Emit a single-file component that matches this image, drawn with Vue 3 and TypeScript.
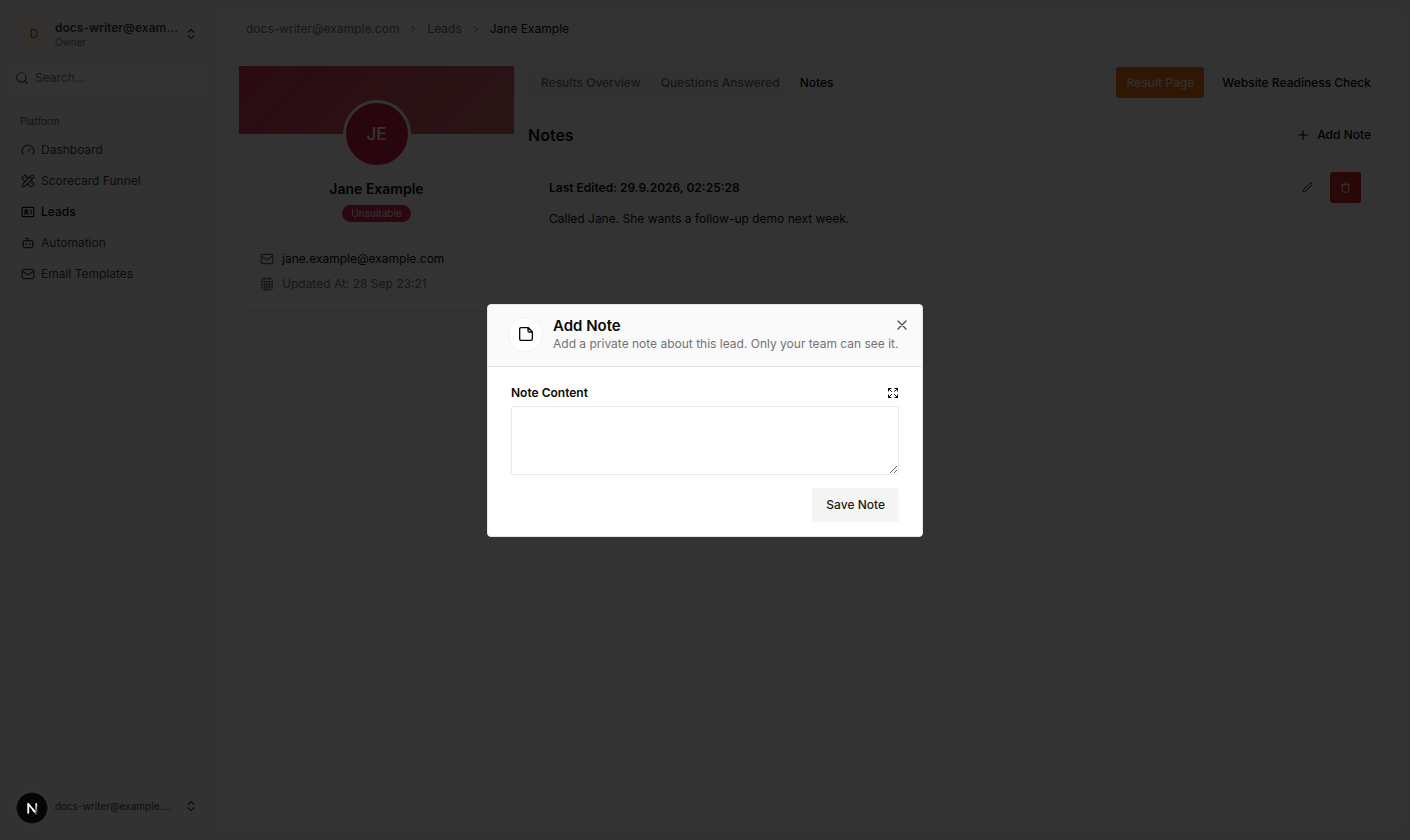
<script setup lang="ts">
import { ref } from 'vue'

interface NavItem {
  label: string
  icon: string
}

const navItems: NavItem[] = [
  { label: 'Dashboard', icon: 'gauge' },
  { label: 'Scorecard Funnel', icon: 'tools' },
  { label: 'Leads', icon: 'contact' },
  { label: 'Automation', icon: 'bot' },
  { label: 'Email Templates', icon: 'mail' },
]
const tabs: string[] = ['Results Overview', 'Questions Answered', 'Notes']
const activeNav = ref('Leads')
const activeTab = ref('Notes')
const search = ref('')
const note = ref('')
</script>

<template>
  <div class="app">
    <aside class="sidebar">
      <button class="account" type="button">
        <span class="account-logo">D</span>
        <span class="account-text">
          <span class="account-name">docs-writer@example.com</span>
          <span class="account-role">Owner</span>
        </span>
        <svg class="icon" viewBox="0 0 24 24"><path d="m7 15 5 5 5-5M7 9l5-5 5 5" /></svg>
      </button>
      <label class="search">
        <svg class="icon" viewBox="0 0 24 24"><circle cx="11" cy="11" r="8" /><path d="m21 21-4.3-4.3" /></svg>
        <input v-model="search" type="text" placeholder="Search..." aria-label="Search" />
      </label>
      <nav class="nav">
        <span class="nav-title">Platform</span>
        <a
          v-for="item in navItems"
          :key="item.label"
          href="#"
          class="nav-link"
          :class="{ active: item.label === activeNav }"
          @click.prevent="activeNav = item.label"
        >
          <svg class="icon" viewBox="0 0 24 24">
            <path v-if="item.icon === 'gauge'" d="m12 14 4-4M3.34 19a10 10 0 1 1 17.32 0" />
            <template v-else-if="item.icon === 'tools'">
              <path d="M13 7 8.7 2.7a2.41 2.41 0 0 0-3.4 0L2.7 5.3a2.41 2.41 0 0 0 0 3.4L7 13M8 6l2-2M18 16l2-2M17 11l4.3 4.3c.94.94.94 2.46 0 3.4l-2.6 2.6c-.94.94-2.46.94-3.4 0L11 17" />
              <path d="M21.174 6.812a1 1 0 0 0-3.986-3.987L3.842 16.174a2 2 0 0 0-.5.83l-1.321 4.352a.5.5 0 0 0 .623.622l4.353-1.32a2 2 0 0 0 .83-.497zM15 5l4 4" />
            </template>
            <template v-else-if="item.icon === 'contact'">
              <rect x="2" y="4" width="20" height="16" rx="2" />
              <circle cx="9" cy="10" r="2" />
              <path d="M6 16c0-4 6-4 6 0M16 10h2M16 14h2" />
            </template>
            <template v-else-if="item.icon === 'bot'">
              <rect x="4" y="8" width="16" height="12" rx="2" />
              <path d="M12 8V4H8M2 14h2M20 14h2M15 13v2M9 13v2" />
            </template>
            <template v-else>
              <rect x="2" y="4" width="20" height="16" rx="2" />
              <path d="m22 7-8.97 5.7a1.94 1.94 0 0 1-2.06 0L2 7" />
            </template>
          </svg>
          {{ item.label }}
        </a>
      </nav>
      <button class="user" type="button">
        <span class="user-name">docs-writer@example.com</span>
        <svg class="icon" viewBox="0 0 24 24"><path d="m7 15 5 5 5-5M7 9l5-5 5 5" /></svg>
      </button>
    </aside>

    <main class="main">
      <header class="crumbs">
        <a href="#">docs-writer@example.com</a>
        <svg class="chevron" viewBox="0 0 24 24"><path d="m9 18 6-6-6-6" /></svg>
        <a href="#">Leads</a>
        <svg class="chevron" viewBox="0 0 24 24"><path d="m9 18 6-6-6-6" /></svg>
        <span class="crumb-current">Jane Example</span>
      </header>

      <div class="content">
        <section class="profile">
          <div class="banner"></div>
          <div class="avatar">JE</div>
          <h2 class="profile-name">Jane Example</h2>
          <span class="status">Unsuitable</span>
          <div class="facts">
            <a class="fact strong" href="#">
              <svg class="icon" viewBox="0 0 24 24"><rect x="2" y="4" width="20" height="16" rx="2" /><path d="m22 7-8.97 5.7a1.94 1.94 0 0 1-2.06 0L2 7" /></svg>
              jane.example@example.com
            </a>
            <span class="fact">
              <svg class="icon thin" viewBox="0 0 24 24"><rect x="3" y="3" width="18" height="19" rx="2" /><path d="M3 8h18M3 13h18M3 17h18M8 8v14M12 8v14M16 8v14M8 1v4M16 1v4" /></svg>
              Updated At: 28 Sep 23:21
            </span>
          </div>
        </section>

        <section class="detail">
          <div class="bar">
            <div class="tabs" role="tablist">
              <button
                v-for="tab in tabs"
                :key="tab"
                type="button"
                role="tab"
                class="tab"
                :class="{ active: tab === activeTab }"
                :aria-selected="tab === activeTab"
                @click="activeTab = tab"
              >
                {{ tab }}
              </button>
            </div>
            <div class="bar-actions">
              <button class="btn orange" type="button">Result Page</button>
              <button class="btn outline" type="button">Website Readiness Check</button>
            </div>
          </div>
          <div class="notes-head">
            <h1>Notes</h1>
            <button class="btn outline add" type="button">
              <svg class="icon" viewBox="0 0 24 24"><path d="M5 12h14M12 5v14" /></svg>
              Add Note
            </button>
          </div>
          <article class="note">
            <div class="note-head">
              <h3>Last Edited: 29.9.2026, 02:25:28</h3>
              <div class="note-actions">
                <button class="btn outline square" type="button" aria-label="Edit note">
                  <svg class="glyph" viewBox="0 0 24 24"><path d="M21.174 6.812a1 1 0 0 0-3.986-3.987L3.842 16.174a2 2 0 0 0-.5.83l-1.321 4.352a.5.5 0 0 0 .623.622l4.353-1.32a2 2 0 0 0 .83-.497z" /></svg>
                </button>
                <button class="btn red square" type="button" aria-label="Delete note">
                  <svg class="glyph" viewBox="0 0 24 24"><path d="M3 6h18M19 6v14a2 2 0 0 1-2 2H7a2 2 0 0 1-2-2V6M8 6V4a2 2 0 0 1 2-2h4a2 2 0 0 1 2 2v2" /></svg>
                </button>
              </div>
            </div>
            <p>Called Jane. She wants a follow-up demo next week.</p>
          </article>
        </section>
      </div>
    </main>

    <div class="overlay">
      <form class="dialog" role="dialog" aria-modal="true" aria-labelledby="dialog-title" @submit.prevent>
        <header class="dialog-head">
          <span class="dialog-icon">
            <svg class="icon" viewBox="0 0 24 24"><path d="M15.500 2.500H4.500a2 2 0 0 0-2 2v15a2 2 0 0 0 2 2h15a2 2 0 0 0 2-2V8.500zM15 2.500V7a2 2 0 0 0 2 2h4.500" /></svg>
          </span>
          <div class="dialog-titles">
            <h2 id="dialog-title">Add Note</h2>
            <p>Add a private note about this lead. Only your team can see it.</p>
          </div>
          <button class="close" type="button" aria-label="Close">
            <svg class="icon" viewBox="0 0 24 24"><path d="M18 6 6 18M6 6l12 12" /></svg>
          </button>
        </header>
        <div class="dialog-body">
          <div class="field-head">
            <label for="note-content">Note Content</label>
            <button class="expand" type="button" aria-label="Expand editor">
              <svg viewBox="0 0 24 24"><path d="m15 15 6 6M15 9l6-6M21 16v5h-5M21 8V3h-5M3 16v5h5M3 21l6-6M3 8V3h5M9 9 3 3" /></svg>
            </button>
          </div>
          <textarea id="note-content" v-model="note"></textarea>
          <button class="save" type="submit">Save Note</button>
        </div>
      </form>
    </div>

    <button class="dev-badge" type="button" aria-label="Developer tools">
      <svg viewBox="0 0 32 32">
        <defs>
          <linearGradient id="fade-diagonal" x1="18" y1="18" x2="22" y2="24" gradientUnits="userSpaceOnUse">
            <stop stop-color="#fff" />
            <stop offset="1" stop-color="#fff" stop-opacity="0" />
          </linearGradient>
          <linearGradient id="fade-stem" x1="20" y1="11" x2="20" y2="21" gradientUnits="userSpaceOnUse">
            <stop stop-color="#fff" />
            <stop offset="1" stop-color="#fff" stop-opacity="0.3" />
          </linearGradient>
        </defs>
        <path d="M12 21V11.500L18.500 19.500" fill="none" stroke="#fff" stroke-width="2" stroke-linejoin="round" />
        <path d="m17 17.700 4 5" stroke="url(#fade-diagonal)" stroke-width="2" />
        <path d="M19.500 11h2v9h-2z" fill="url(#fade-stem)" stroke="none" />
      </svg>
    </button>
  </div>
</template>

<style>
body {
  margin: 0;
}
</style>

<style scoped>
* {
  box-sizing: border-box;
}
.app {
  display: flex;
  min-height: 100vh;
  background: #fafafa;
  color: #0a0a0a;
  font-family: Inter, 'Liberation Sans', sans-serif;
  font-size: 12px;
  line-height: 20px;
}
button,
input,
textarea {
  font: inherit;
  color: inherit;
}
button {
  padding: 0;
  border: 0;
  background: none;
}
a {
  color: inherit;
  text-decoration: none;
}
h1,
h2,
h3,
p {
  margin: 0;
}
svg {
  fill: none;
  stroke: currentColor;
  stroke-width: 2;
  stroke-linecap: round;
  stroke-linejoin: round;
}
.icon {
  flex: none;
  width: 14px;
  height: 14px;
}
.thin {
  stroke-width: 1.5;
}

.sidebar {
  display: flex;
  flex: none;
  flex-direction: column;
  width: 219px;
  padding: 12px 12px 16px 8px;
}
.account {
  display: flex;
  align-items: center;
  gap: 2px;
  height: 44px;
  padding: 0 9px 0 12px;
  text-align: left;
  color: #404040;
}
.account-logo {
  display: flex;
  flex: none;
  align-items: center;
  justify-content: center;
  width: 28px;
  height: 28px;
  margin-right: 5px;
  border-radius: 6px;
  background: #fff0e6;
  color: #a8552a;
}
.account-text {
  display: flex;
  flex: 1;
  flex-direction: column;
  min-width: 0;
}
.account-name {
  overflow: hidden;
  font-weight: 600;
  line-height: 16px;
  text-overflow: ellipsis;
  white-space: nowrap;
}
.account-role {
  font-size: 10px;
  line-height: 12px;
  color: #777;
}
.search {
  display: flex;
  align-items: center;
  gap: 6px;
  height: 28px;
  margin-top: 8px;
  padding: 0 7px;
  border-radius: 4px;
  background: #fff;
  color: #555;
}
.search input {
  flex: 1;
  min-width: 0;
  padding: 0;
  border: 0;
  outline: 0;
  background: none;
}
.search input::placeholder {
  color: #737373;
  opacity: 1;
}
.nav {
  display: flex;
  flex: 1;
  flex-direction: column;
  gap: 3px;
  margin-top: 17px;
}
.nav-title {
  padding: 4px 12px;
  font-size: 10px;
  line-height: 16px;
  color: #666;
}
.nav-link {
  display: flex;
  align-items: center;
  gap: 6px;
  height: 28px;
  padding: 0 13px;
  border-radius: 4px;
  color: #404040;
}
.nav-link.active {
  background: #f7f7f7;
  color: #0a0a0a;
  font-weight: 500;
}
.user {
  display: flex;
  align-items: center;
  gap: 12px;
  padding: 0 9px 0 47px;
  margin-bottom: 8px;
  text-align: left;
  color: #444;
  font-size: 10px;
}
.user-name {
  flex: 1;
  overflow: hidden;
  text-overflow: ellipsis;
  white-space: nowrap;
}

.main {
  flex: 1;
  min-width: 0;
  margin: 8px 8px 8px 0;
  border-radius: 8px;
  background: #fff;
}
.crumbs {
  display: flex;
  align-items: center;
  gap: 8px;
  height: 42px;
  padding: 0 27px;
  color: #737373;
}
.chevron {
  width: 12px;
  height: 12px;
}
.crumb-current {
  color: #0a0a0a;
}
.content {
  display: flex;
  align-items: flex-start;
  gap: 14px;
  padding: 16px 20px;
}
.profile {
  display: flex;
  flex: none;
  flex-direction: column;
  align-items: center;
  width: 275px;
  padding-bottom: 16px;
  border-radius: 6px;
  box-shadow: 0 1px 3px rgba(0, 0, 0, 0.1);
}
.banner {
  align-self: stretch;
  height: 68px;
  background: linear-gradient(135deg, #d63a5a, #cf4e60 50%, #cc6a70);
}
.avatar {
  display: flex;
  align-items: center;
  justify-content: center;
  width: 68px;
  height: 68px;
  margin-top: -34px;
  border: 3px solid #fff;
  border-radius: 50%;
  background: #cc2246;
  color: #fff;
  font-size: 17px;
  font-weight: 500;
}
.profile-name {
  margin-top: 11px;
  font-size: 14px;
  font-weight: 600;
  line-height: 20px;
}
.status {
  margin-top: 6px;
  padding: 0 9px;
  border-radius: 9px;
  background: #d42a50;
  color: #fff;
  font-size: 10px;
  line-height: 17px;
}
.facts {
  display: flex;
  flex-direction: column;
  align-self: stretch;
  gap: 5px;
  margin: 14px 21px 0;
  padding-top: 12px;
  border-top: 1px solid #f2f2f2;
}
.fact {
  display: flex;
  align-items: center;
  gap: 8px;
  color: #737373;
}
.fact.strong {
  color: #0a0a0a;
}
.fact .icon {
  color: #606060;
}

.detail {
  flex: 1;
  min-width: 0;
}
.bar,
.notes-head,
.note-head,
.bar-actions,
.note-actions {
  display: flex;
  align-items: center;
}
.bar,
.notes-head,
.note-head {
  justify-content: space-between;
}
.bar {
  padding-top: 1px;
}
.tabs {
  display: flex;
  height: 31px;
  padding: 3px;
  border-radius: 4px;
  background: #f7f7f7;
}
.tab {
  padding: 0 10px;
  border-radius: 3px;
  color: #737373;
  font-weight: 500;
}
.tab.active {
  background: #fff;
  color: #0a0a0a;
}
.bar-actions,
.note-actions {
  gap: 7px;
}
.btn {
  display: flex;
  align-items: center;
  justify-content: center;
  gap: 7px;
  height: 31px;
  padding: 0 10px;
  border-radius: 3px;
  font-weight: 500;
}
.btn.outline {
  border: 1px solid #f5f5f5;
  background: #fff;
}
.btn.orange {
  background: #e8701c;
  color: #ffe4d0;
}
.btn.red {
  background: #d62a2a;
  color: #fff;
}
.btn.square {
  width: 31px;
  padding: 0;
}
.glyph {
  width: 11px;
  height: 11px;
}
.notes-head {
  margin-top: 21px;
}
.notes-head h1 {
  font-size: 16px;
  font-weight: 600;
}
.note {
  margin-top: 14px;
  padding: 7px 20px 20px;
  border: 1px solid #f0f0f0;
  border-radius: 6px;
  box-shadow: 0 1px 2px rgba(0, 0, 0, 0.06);
}
.note h3 {
  font-size: 12px;
  font-weight: 600;
}
.note p {
  margin-top: 6px;
}

.overlay {
  position: fixed;
  inset: 0;
  display: flex;
  align-items: center;
  justify-content: center;
  background: rgba(0, 0, 0, 0.8);
}
.dialog {
  width: 436px;
  overflow: hidden;
  border: 1px solid #e5e5e5;
  border-radius: 4px;
  background: #fff;
}
.dialog-head {
  display: flex;
  align-items: flex-start;
  height: 62px;
  padding: 12px 12px 0 20px;
  border-bottom: 1px solid #e5e5e5;
  background: #fafafa;
}
.dialog-icon {
  display: flex;
  flex: none;
  align-items: center;
  justify-content: center;
  width: 35px;
  height: 35px;
  margin-right: 10px;
  border: 1px solid #f0f0f0;
  border-radius: 50%;
  background: #fff;
}
.dialog-icon .icon {
  width: 16px;
  height: 16px;
}
.dialog-titles {
  flex: 1;
  min-width: 0;
}
.dialog-titles h2 {
  font-size: 15px;
  font-weight: 600;
  line-height: 18px;
}
.dialog-titles p {
  line-height: 18px;
  color: #737373;
}
.close {
  display: flex;
  flex: none;
  align-items: center;
  justify-content: center;
  width: 16px;
  height: 16px;
  margin-left: -16px;
  color: #525252;
}
.close .icon {
  width: 16px;
  height: 16px;
}
.dialog-body {
  display: flex;
  flex-direction: column;
  padding: 16px 23px 14px;
}
.field-head {
  display: flex;
  align-items: center;
  justify-content: space-between;
  font-weight: 600;
}
.expand {
  display: flex;
}
.expand svg {
  width: 12px;
  height: 12px;
}
textarea {
  height: 69px;
  margin: 3px 0 13px;
  padding: 8px 12px;
  border: 1px solid #e8e8e8;
  border-radius: 2px;
  outline: 0;
  background: #fff;
  resize: vertical;
}
.save {
  align-self: flex-end;
  height: 34px;
  padding: 0 14px;
  border-radius: 2px;
  background: #f5f5f4;
  color: #1c1917;
  font-weight: 500;
}

.dev-badge {
  position: fixed;
  bottom: 16px;
  left: 16px;
  width: 32px;
  height: 32px;
  border: 1px solid #1f1f1f;
  border-radius: 50%;
  background: #050505;
  box-shadow: 0 0 0 1px #3a3a3a;
}
.dev-badge svg {
  display: block;
  width: 30px;
  height: 30px;
}
</style>
